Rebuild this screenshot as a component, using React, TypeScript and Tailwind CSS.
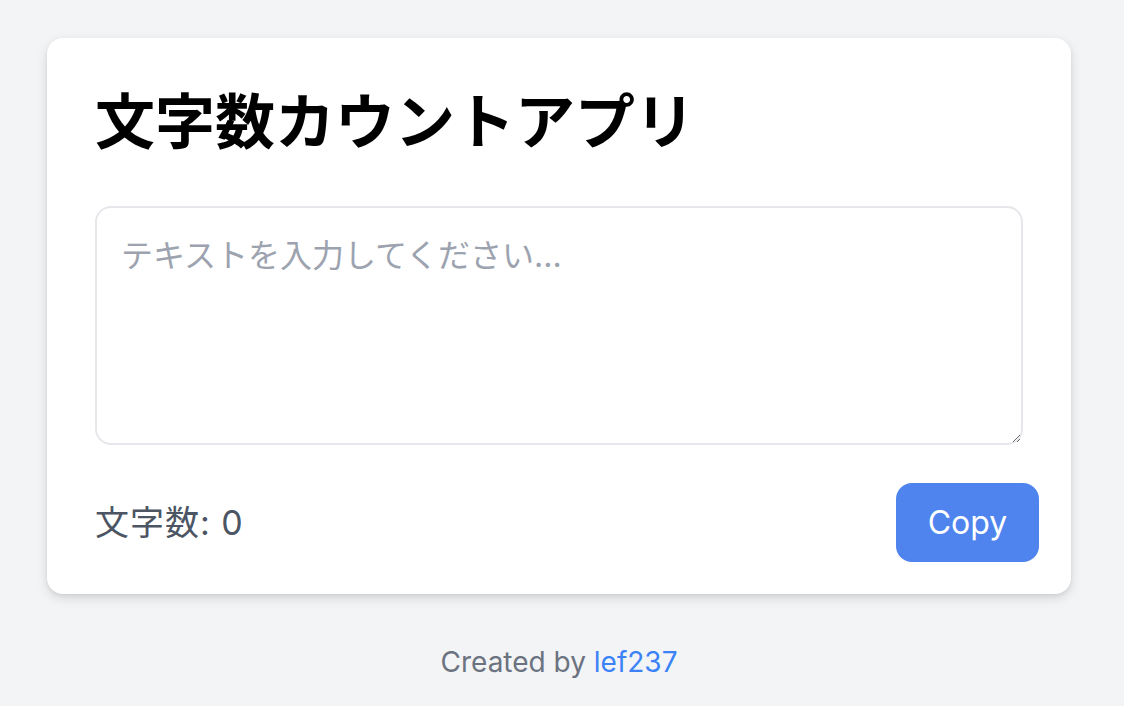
import { useState } from "react";

export default function App() {
  const [text, setText] = useState("");

  return (
    <div className="min-h-screen w-full bg-[#f3f4f6] [font-family:Inter,'Noto_Sans_CJK_JP',sans-serif]">
      <div className="flex w-[1118px] flex-col items-center pt-[38px]">
        <div className="w-[1024px] rounded-2xl bg-white px-12 pt-12 pb-8 shadow-[0_4px_12px_rgba(0,0,0,0.12),0_2px_4px_rgba(0,0,0,0.06)]">
          <h1 className="text-[60px] font-bold leading-[72px] text-black">
            文字数カウントアプリ
          </h1>
          <textarea
            value={text}
            onChange={(e) => setText(e.target.value)}
            placeholder="テキストを入力してください..."
            className="mt-12 block h-[239px] w-full rounded-2xl border-2 border-[#e5e7eb] px-6 py-6 text-[32px] leading-[48px] text-gray-800 outline-none placeholder:text-[#9ca3af]"
          />
          <div className="mt-[38px] flex items-center justify-between">
            <p className="text-[34px] leading-[48px] tracking-[1px] text-[#4b5563]">
              文字数: {text.length}
            </p>
            <button
              type="button"
              onClick={() => navigator.clipboard?.writeText(text)}
              className="-mr-4 h-[79px] w-[143px] rounded-2xl bg-[#4f84ee] text-[32px] text-white"
            >
              Copy
            </button>
          </div>
        </div>
        <p className="mt-12 text-[28px] leading-[40px] text-[#6b7280]">
          Created by <a href="#" className="text-[#3b82f6]">lef237</a>
        </p>
      </div>
    </div>
  );
}
